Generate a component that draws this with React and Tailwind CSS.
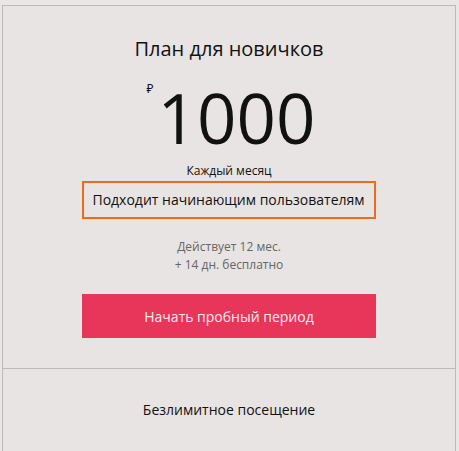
import React from "react";

const PlanCard = () => {
  return (
    <div className="ml-[2px] mt-[5px] w-[454px] border border-[#bcb9b8] bg-[#e8e4e3] text-[#111]">
      <div className="flex flex-col items-center pt-[29px] pb-[30px] border-b border-[#bcb9b8]">
        <h2 className="text-[20px] leading-[28px] font-normal">План для новичков</h2>
        <div className="mt-[20px] flex items-start pl-[4px]">
          <span className="text-[12px] leading-[14px] -mt-[1px] mr-[4px]">₽</span>
          <span className="text-[69px] leading-[69px]">1000</span>
        </div>
        <div className="mt-[11px] text-[12px] leading-[16px]">Каждый месяц</div>
        <div className="mt-[2px] border-2 border-[#ee6a1f] pl-[8px] pr-[9px] py-[7px] text-[14px] leading-[20px]">
          Подходит начинающим пользователям
        </div>
        <div className="mt-[19px] text-center text-[12px] leading-[18px] text-[#666]">
          <p>Действует 12 мес.</p>
          <p>+ 14 дн. бесплатно</p>
        </div>
        <button className="mt-[20px] h-[44px] w-[294px] bg-[#e8355a] text-[14px] text-[#fbeef1]">
          Начать пробный период
        </button>
      </div>
      <div className="pt-[31px] pb-[40px] text-center text-[14px] leading-[20px]">
        Безлимитное посещение
      </div>
    </div>
  );
};

export default function App() {
  return (
    <div
      className="min-h-[451px] w-[459px] overflow-hidden bg-[#eae6e5]"
      style={{ fontFamily: '"Open Sans", "Noto Sans", sans-serif' }}
    >
      <PlanCard />
    </div>
  );
}
